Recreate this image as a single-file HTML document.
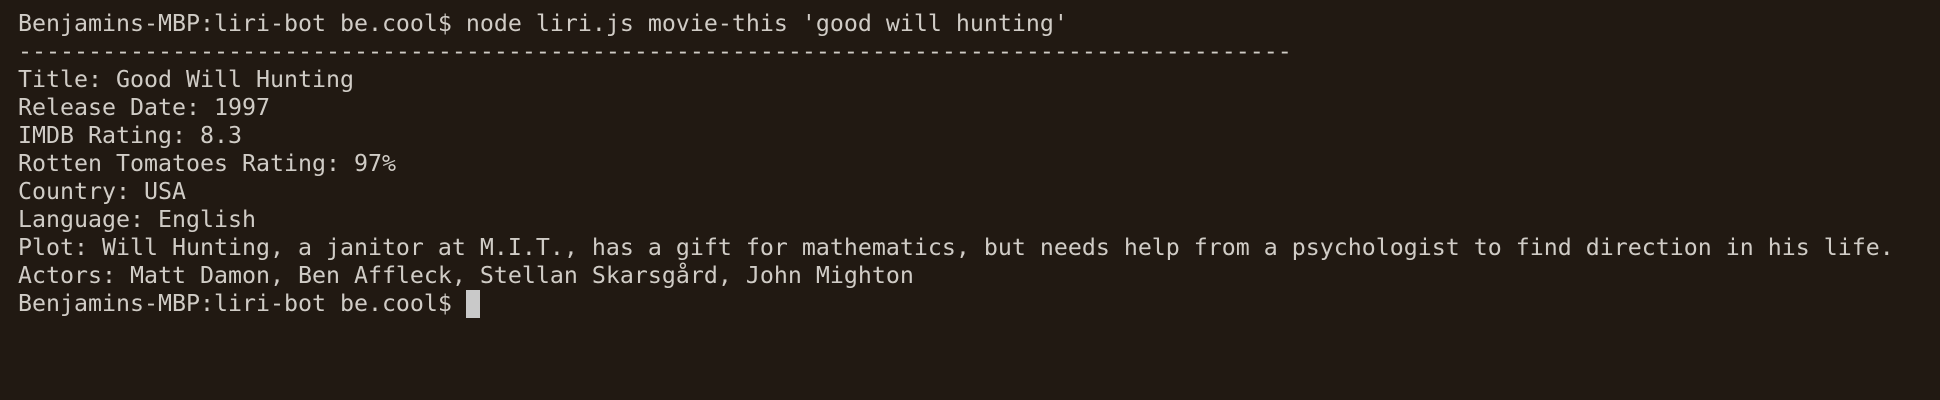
<!DOCTYPE html>
<html><head><meta charset="utf-8"><style>
html,body{margin:0;padding:0;background:#211912;width:1940px;height:400px;overflow:hidden}
pre{margin:0;padding:10px 0 0 18px;font-family:"DejaVu Sans Mono","Liberation Mono",monospace;font-size:23.25px;line-height:28px;color:#d0ccc6;white-space:pre}
.cur{display:inline-block;width:14px;height:28px;background:#c9c9c9;vertical-align:top;margin-top:0}
</style></head><body><pre>Benjamins-MBP:liri-bot be.cool$ node liri.js movie-this 'good will hunting'
-------------------------------------------------------------------------------------------
Title: Good Will Hunting
Release Date: 1997
IMDB Rating: 8.3
Rotten Tomatoes Rating: 97%
Country: USA
Language: English
Plot: Will Hunting, a janitor at M.I.T., has a gift for mathematics, but needs help from a psychologist to find direction in his life.
Actors: Matt Damon, Ben Affleck, Stellan Skarsgård, John Mighton
Benjamins-MBP:liri-bot be.cool$ <span class="cur"></span></pre></body></html>
